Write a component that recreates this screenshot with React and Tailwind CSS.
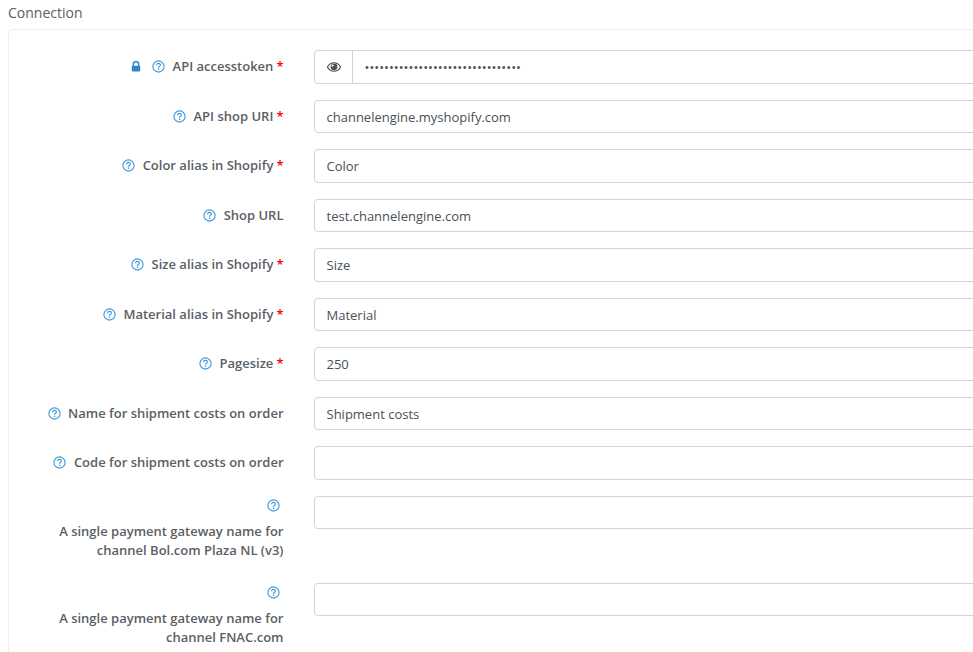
import React from "react";

const Help = () => (
  <svg width="13" height="13" viewBox="0 0 13 13" fill="none" className="shrink-0">
    <circle cx="6.5" cy="6.5" r="5.6" stroke="#3a97d9" strokeWidth="1.1" />
    <path d="M4.5 5.2C4.6 4.1 5.4 3.4 6.5 3.4c1.1 0 1.9.7 1.9 1.6 0 .8-.4 1.1-1 1.5-.5.3-.9.6-.9 1.3" stroke="#3a97d9" strokeWidth="1.1" fill="none" />
    <rect x="5.9" y="8.6" width="1.3" height="1.3" fill="#3a97d9" />
  </svg>
);

const Lock = () => (
  <svg width="10" height="11" viewBox="0 0 10 11" className="shrink-0">
    <path d="M2.2 5V3.4C2.2 1.8 3.4.8 5 .8s2.8 1 2.8 2.6V5" fill="none" stroke="#2a8ac9" strokeWidth="1.4" />
    <rect x="0.8" y="4.8" width="8.4" height="5.8" rx="1" fill="#2a8ac9" />
  </svg>
);

const Eye = () => (
  <svg width="14" height="10" viewBox="0 0 14 10">
    <path d="M.4 5C2 2.2 4.3.8 7 .8s5 1.4 6.6 4.2C12 7.8 9.7 9.2 7 9.2S2 7.8.4 5Z" fill="#fff" stroke="#495057" strokeWidth="1.1" />
    <circle cx="7" cy="4.8" r="3.4" fill="#495057" />
    <circle cx="5.6" cy="3.6" r="1.1" fill="#fff" />
  </svg>
);

const Star = () => <span className="text-[#f00] ml-[3px]">*</span>;

const fields = [
  { label: "API accesstoken", req: true, value: "••••••••••••••••••••••••••••••••", secret: true },
  { label: "API shop URI", req: true, value: "channelengine.myshopify.com" },
  { label: "Color alias in Shopify", req: true, value: "Color" },
  { label: "Shop URL", value: "test.channelengine.com" },
  { label: "Size alias in Shopify", req: true, value: "Size" },
  { label: "Material alias in Shopify", req: true, value: "Material" },
  { label: "Pagesize", req: true, value: "250" },
  { label: "Name for shipment costs on order", value: "Shipment costs" },
  { label: "Code for shipment costs on order", value: "" },
];

const Input = ({ value, secret }) => (
  <div className="flex-1 flex h-[33.5px] border border-[#ced4da] rounded-[4px] bg-white text-[#495057] overflow-hidden">
    {secret && (
      <div className="w-[38px] shrink-0 flex items-center justify-center border-r border-[#ced4da]">
        <Eye />
      </div>
    )}
    <div className="pl-[11.5px] pr-3 pt-[2px] flex items-center">{value}</div>
  </div>
);

const Tall = ({ line1, line2 }) => (
  <div className="flex mb-[22px]">
    <div className="w-[274.5px] shrink-0 text-right font-semibold text-[#5a6066] leading-[19.5px]">
      <div className="flex justify-end pr-[4px] h-[21px] pt-[3px]"><Help /></div>
      <div className="mt-[5px]">{line1}</div>
      <div>{line2}</div>
    </div>
    <div className="ml-[30.5px] flex-1 flex"><Input value="" /></div>
  </div>
);

export default function App() {
  return (
    <div className="w-[973px] h-[652px] overflow-hidden bg-white text-[13px] font-['Open_Sans',sans-serif]">
      <div className="pl-2 pt-[3px] text-[14px] leading-[20px] text-[#5a6066]">Connection</div>
      <div className="ml-2 mt-[6px] w-[1100px] border border-[#edf0f2] rounded-[4px] pt-[20px] pb-4">
        {fields.map((f) => (
          <div key={f.label} className="flex mb-4">
            <div className="w-[274.5px] shrink-0 flex items-center justify-end gap-[7.5px] h-[33.5px] font-semibold text-[#5a6066]">
              {f.label === "API accesstoken" && <span className="mr-[4px] flex"><Lock /></span>}
              <Help />
              <span>{f.label}{f.req && <Star />}</span>
            </div>
            <div className="ml-[30.5px] flex-1 flex"><Input value={f.value} secret={f.secret} /></div>
          </div>
        ))}
        <Tall line1="A single payment gateway name for" line2="channel Bol.com Plaza NL (v3)" />
        <Tall line1="A single payment gateway name for" line2="channel FNAC.com" />
      </div>
    </div>
  );
}
